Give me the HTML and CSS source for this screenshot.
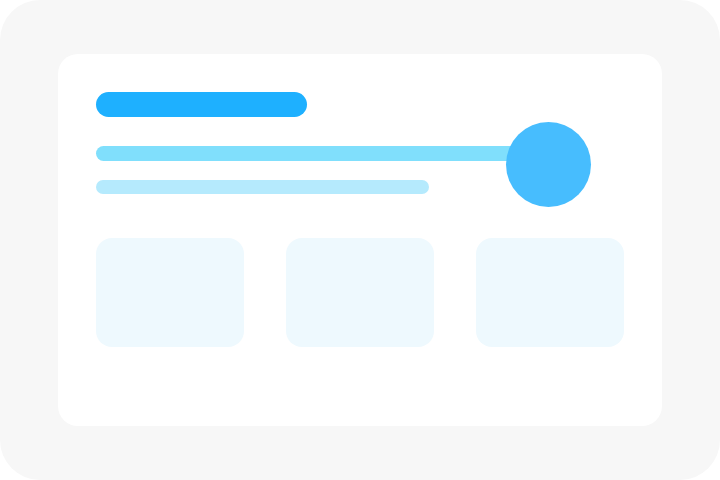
FILE: index.html
```html
<!DOCTYPE html>
<html>
<head>
<meta charset="utf-8">
<link rel="stylesheet" href="styles.css">
</head>
<body>
<div class="frame">
  <div class="card">
    <div class="title-bar"></div>
    <div class="line-row">
      <div class="line line-main"></div>
      <div class="knob"></div>
    </div>
    <div class="line line-sub"></div>
    <div class="tiles">
      <div class="tile"></div>
      <div class="tile"></div>
      <div class="tile"></div>
    </div>
  </div>
</div>
</body>
</html>
```
FILE: styles.css
```css
html, body {
  margin: 0;
  padding: 0;
  background: #ffffff;
}
.frame {
  width: 720px;
  height: 480px;
  box-sizing: border-box;
  background: #f7f7f7;
  border-radius: 40px;
  padding: 54px 58px;
}
.card {
  height: 372px;
  box-sizing: border-box;
  background: #ffffff;
  border-radius: 20px;
  padding: 38px 38px;
  display: flex;
  flex-direction: column;
}
.title-bar {
  width: 211px;
  height: 25px;
  border-radius: 13px;
  background: #1eb0ff;
  margin-bottom: 29px;
}
.line-row {
  position: relative;
  height: 15px;
  margin-bottom: 19px;
}
.line {
  border-radius: 8px;
}
.line-main {
  width: 452px;
  height: 15px;
  background: #80dffc;
}
.knob {
  position: absolute;
  left: 410px;
  top: -24px;
  width: 85px;
  height: 85px;
  border-radius: 50%;
  background: #47bdfe;
}
.line-sub {
  width: 333px;
  height: 14px;
  background: #b5eafd;
  margin-bottom: 44px;
}
.tiles {
  display: flex;
  gap: 42px;
}
.tile {
  width: 148px;
  height: 109px;
  border-radius: 16px;
  background: #eef9fe;
}
```
